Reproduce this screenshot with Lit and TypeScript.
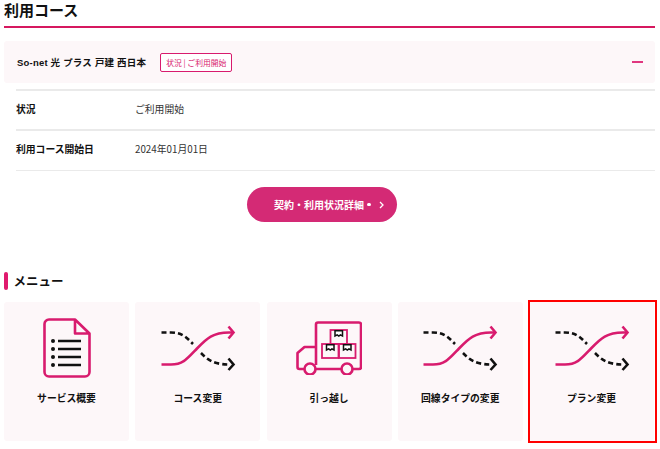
import { LitElement, html, css, svg } from "lit";
import { customElement } from "lit/decorators.js";

const shuffle = svg`<svg class="ic" width="76" height="46" viewBox="1 0 76 46" fill="none" stroke-width="2.6">
  <path d="M2.500 7.500H12C24 7.500 28 13 34 19M42 28C48 34 54 39.500 70 39.500" stroke="#111" stroke-dasharray="5 3.200"/>
  <path d="M69.500 33.500L74.500 39.500L69.500 45" stroke="#111"/>
  <path d="M2.500 39.500H12C24 39.500 28 34 38 23.500C48 13 54 7.500 70 7.500H74" stroke="#d81b6e"/>
  <path d="M69.500 1.500L74.500 7.500L69.500 13.500" stroke="#d81b6e"/>
</svg>`;

const doc = svg`<svg class="ic" width="48" height="60" viewBox="0 0 48 60" fill="none">
  <path d="M32 1.500H6A4.500 4.500 0 0 0 1.500 6V54A4.500 4.500 0 0 0 6 58.500H42A4.500 4.500 0 0 0 46.500 54V15.500Z M32 1.500V15.500H46.500" stroke="#d81b6e" stroke-width="2.600" stroke-linejoin="round"/>
  <path d="M15 23H38M15 31H38M15 39H38M15 47H38" stroke="#111" stroke-width="2.600"/>
  <circle cx="10" cy="23" r="2" fill="#111"/><circle cx="10" cy="31" r="2" fill="#111"/><circle cx="10" cy="39" r="2" fill="#111"/><circle cx="10" cy="47" r="2" fill="#111"/>
</svg>`;

const box = (x: number, y: number) => svg`<g transform="translate(${x} ${y})">
  <rect x="0" y="0" width="16.500" height="14" fill="none" stroke="#d81b6e" stroke-width="1.800"/>
  <path d="M4.500 .8V6L6.700 4.800L8.300 6L9.900 4.800L12 6V.8Z" fill="#fff" stroke="#111" stroke-width="1.500"/>
</g>`;

const truck = svg`<svg class="ic" width="66" height="54" viewBox="0 0 66 54" fill="none">
  <path d="M20 44V3.500A2 2 0 0 1 22 1.500H63A2 2 0 0 1 65 3.500V46A2 2 0 0 1 63 48H57M45 48H20M8 48H3.500A2 2 0 0 1 1.500 46V32L8.500 26H20" stroke="#d81b6e" stroke-width="2.600" stroke-linejoin="round"/>
  <circle cx="14" cy="48" r="5.500" fill="#fdf7f9" stroke="#d81b6e" stroke-width="2.600"/>
  <circle cx="51" cy="48" r="5.500" fill="#fdf7f9" stroke="#d81b6e" stroke-width="2.600"/>
  ${box(34.5, 9)}${box(26, 23)}${box(43, 23)}
</svg>`;

@customElement("app-root")
export class AppRoot extends LitElement {
  static styles = css`
    :host { display: block; width: 660px; height: 449px; overflow: hidden; background: #fff; color: #111;
      font-family: "Noto Sans CJK JP", sans-serif; box-sizing: border-box; padding: 0 5px 0 4px; }
    h1 { margin: 0; height: 28px; box-sizing: border-box; border-bottom: 2.500px solid #d6185f; font-size: 15px; line-height: 20px; font-weight: 700; }
    .acc { margin-top: 13px; height: 42px; display: flex; align-items: center; background: #fdf7f9; border-radius: 3px; padding: 0 12px 0 13px; }
    .acc b { font-size: 9.500px; letter-spacing: .2px; font-weight: 700; font-family: "Liberation Sans", "Noto Sans CJK JP", sans-serif; }
    .tag { margin-left: 14px; height: 19px; width: 72px; box-sizing: border-box; border: 1.500px solid #d81b6e; border-radius: 2px; background: #fff; color: #d81b6e; font-size: 7.800px; display: flex; align-items: center; justify-content: center; white-space: nowrap; }
    .minus { margin-left: auto; width: 11px; height: 2px; background: #e0367f; }
    .rows { margin: 6px 0 0 12px; border-top: 2px solid #eaeaea; }
    .row { box-sizing: border-box; height: 40px; display: flex; align-items: center; border-bottom: 2px solid #eaeaea; padding-bottom: 3px; font-size: 9.800px; }
    .row + .row { border-bottom-width: 1px; padding-bottom: 4px; }
    .row b { width: 119px; font-weight: 700; }
    .row span { color: #333; }
    .btnw { margin: 16px 0 0 243px; }
    .btn { width: 150px; height: 35px; border-radius: 18px; background: #d42a75; color: #fff; font-size: 10px; font-weight: 700; display: flex; align-items: center; gap: 3px; padding-left: 27px; box-sizing: border-box; }
    .dot { width: 3.500px; height: 3.500px; border-radius: 50%; background: #fff; }
    .btn svg { margin-left: 5px; }
    h2 { margin: 49px 0 0; height: 19px; font-size: 12.500px; line-height: 19px; font-weight: 700; display: flex; align-items: center; gap: 6px; }
    h2 i { width: 3.500px; height: 18px; border-radius: 2px; background: #e01a6e; }
    .cards { margin-top: 12px; display: grid; grid-template-columns: repeat(5, 125px); column-gap: 6.250px; }
    .card { position: relative; height: 139px; border-radius: 3px; background: #fdf7f9; display: flex; flex-direction: column; align-items: center; font-size: 9.800px; font-weight: 700; }
    .ico { height: 66px; margin-top: 13px; display: flex; align-items: center; justify-content: center; }
    .card span { margin-top: 10px; line-height: 14px; }
    .sel::after { content: ""; position: absolute; inset: -2px -3px -2px -1px; border: 2px solid #f00; }
  `;

  render() {
    const cards = [
      ["サービス概要", doc, ""],
      ["コース変更", shuffle, ""],
      ["引っ越し", truck, ""],
      ["回線タイプの変更", shuffle, ""],
      ["プラン変更", shuffle, "sel"],
    ] as const;
    return html`
      <h1>利用コース</h1>
      <div class="acc"><b>So-net 光 プラス 戸建 西日本</b><div class="tag">状況 | ご利用開始</div><div class="minus"></div></div>
      <div class="rows">
        <div class="row"><b>状況</b><span>ご利用開始</span></div>
        <div class="row"><b>利用コース開始日</b><span>2024年01月01日</span></div>
      </div>
      <div class="btnw"><div class="btn">契約・利用状況詳細<i class="dot"></i>
        <svg width="5" height="8" viewBox="0 0 5 8" fill="none" stroke="#fff" stroke-width="1.300"><path d="M1 1L4 4L1 7"/></svg></div></div>
      <h2><i></i>メニュー</h2>
      <div class="cards">
        ${cards.map(([t, ic, c]) => html`<div class="card ${c}"><div class="ico">${ic}</div><span>${t}</span></div>`)}
      </div>
    `;
  }
}
